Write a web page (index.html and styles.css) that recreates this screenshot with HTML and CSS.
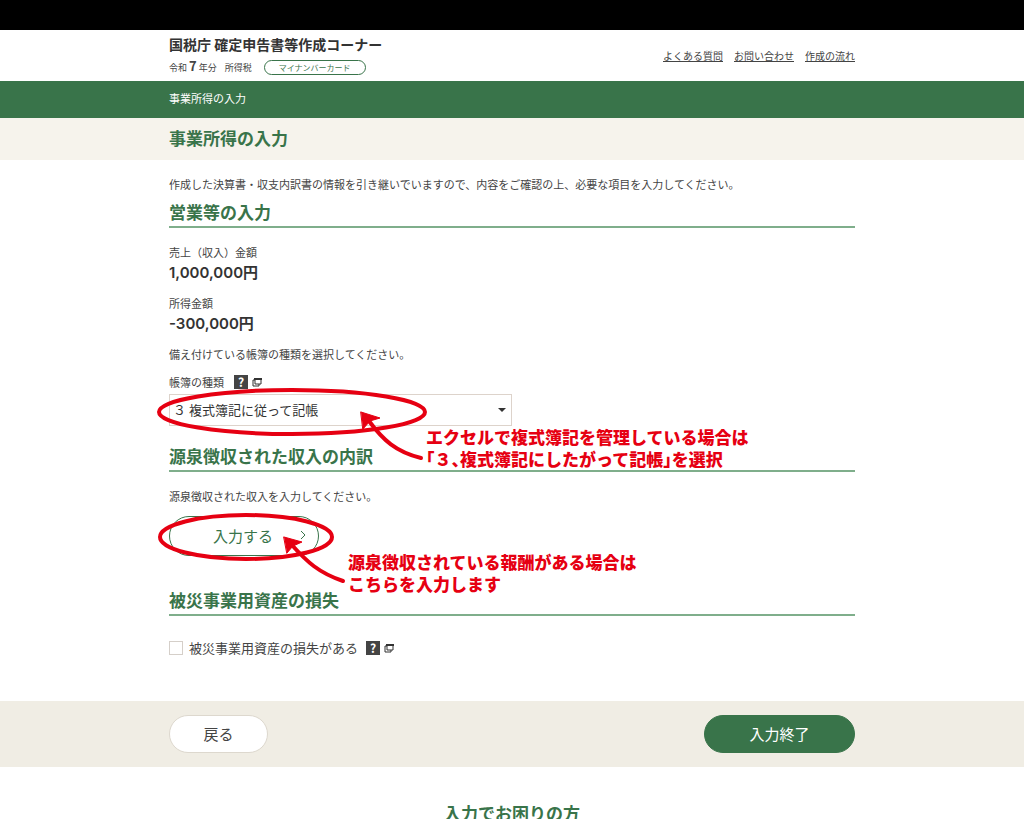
FILE: index.html
```
<!DOCTYPE html>
<html lang="ja">
<head>
    <meta charset="UTF-8">
    <meta name="viewport" content="width=device-width, initial-scale=1.0">
    <title>事業所得の入力</title>
    <link rel="stylesheet" href="styles.css">
</head>
<body>
    <div class="top-bar"></div>
    <header class="header">
        <div class="container header-inner">
            <div>
                <p class="site-name">国税庁 確定申告書等作成コーナー</p>
                <div class="site-meta">
                    <span>令和 <b>7</b> 年分</span>
                    <span>所得税</span>
                    <span class="tag">マイナンバーカード</span>
                </div>
            </div>
            <nav class="header-links">
                <a href="#">よくある質問</a>
                <a href="#">お問い合わせ</a>
                <a href="#">作成の流れ</a>
            </nav>
        </div>
    </header>
    <div class="breadcrumb">
        <div class="container">事業所得の入力</div>
    </div>
    <div class="page-title">
        <h1 class="container">事業所得の入力</h1>
    </div>

    <main class="container main">
        <p class="text">作成した決算書・収支内訳書の情報を引き継いでいますので、内容をご確認の上、必要な項目を入力してください。</p>

        <section>
            <h2>営業等の入力</h2>
            <dl class="amounts">
                <dt>売上（収入）金額</dt>
                <dd>1,000,000円</dd>
                <dt>所得金額</dt>
                <dd>-300,000円</dd>
            </dl>
            <p class="text">備え付けている帳簿の種類を選択してください。</p>
            <div class="label-row">
                <label for="book">帳簿の種類</label>
                <a class="help" href="#" aria-label="ヘルプ">
                    <span class="help-mark">?</span>
                    <svg class="window-icon" viewBox="0 0 10 10"><path d="M1 3h6v6H1z"/><path d="M3 2h6v5H3z"/><path class="thick" d="M2 2h8"/></svg>
                </a>
            </div>
            <div class="select-wrap">
                <select id="book">
                    <option>３ 複式簿記に従って記帳</option>
                </select>
                <div class="note note-book">
                    <svg viewBox="0 0 280 80">
                        <ellipse cx="136" cy="26" rx="133" ry="22"/>
                        <path d="M213 35C227 54 240 66 265 72"/>
                        <polygon points="205,26 224,32 214,35 207,43"/>
                    </svg>
                    <p>エクセルで複式簿記を管理している場合は<br>「３、複式簿記にしたがって記帳」を選択</p>
                </div>
            </div>
        </section>

        <section>
            <h2>源泉徴収された収入の内訳</h2>
            <p class="text">源泉徴収された収入を入力してください。</p>
            <div class="entry">
                <button type="button" class="btn btn-entry">入力する
                    <svg viewBox="0 0 6 10"><path d="M1 1l4 4-4 4"/></svg>
                </button>
                <div class="note note-entry">
                    <svg viewBox="0 0 200 80">
                        <ellipse cx="90" cy="27" rx="86" ry="22"/>
                        <path d="M135 34C151 52 163 63 187 71"/>
                        <polygon points="128,27 146,32 137,36 131,43"/>
                    </svg>
                    <p>源泉徴収されている報酬がある場合は<br>こちらを入力します</p>
                </div>
            </div>
        </section>

        <section>
            <h2>被災事業用資産の損失</h2>
            <div class="check-row">
                <input type="checkbox" id="loss">
                <label for="loss">被災事業用資産の損失がある</label>
                <a class="help" href="#" aria-label="ヘルプ">
                    <span class="help-mark">?</span>
                    <svg class="window-icon" viewBox="0 0 10 10"><path d="M1 3h6v6H1z"/><path d="M3 2h6v5H3z"/><path class="thick" d="M2 2h8"/></svg>
                </a>
            </div>
        </section>
    </main>

    <div class="actions">
        <div class="container actions-inner">
            <button type="button" class="btn btn-back">戻る</button>
            <button type="button" class="btn btn-done">入力終了</button>
        </div>
    </div>

    <footer class="support">
        <h2>入力でお困りの方</h2>
    </footer>
</body>
</html>
```
FILE: styles.css
```
* {
    box-sizing: border-box;
}
html {
    scrollbar-width: none;
}
body {
    margin: 0;
    background-color: #fff;
    color: #444;
    font-family: "Noto Sans CJK JP", sans-serif;
    font-size: 11px;
    line-height: 16px;
}
h1, h2, p, dl, dd {
    margin: 0;
}
.container {
    width: 90%;
    max-width: 686px;
    margin: 0 auto;
}

/* header */
.top-bar {
    height: 30px;
    background-color: #000;
}
.header-inner {
    display: flex;
    justify-content: space-between;
    align-items: center;
    padding: 4px 0;
}
.site-name {
    font-size: 14px;
    font-weight: 700;
    line-height: 20px;
    color: #333;
}
.site-meta {
    display: flex;
    align-items: center;
    gap: 8px;
    margin-top: 4px;
    font-size: 9px;
    line-height: 19px;
}
.site-meta b {
    font-size: 13px;
    font-weight: 700;
    line-height: 16px;
}
.tag {
    margin-left: 4px;
    padding: 0 14px;
    border: 1px solid #39744a;
    border-radius: 8px;
    color: #39744a;
    font-size: 8px;
    line-height: 13px;
}
.header-links {
    display: flex;
    gap: 11px;
    font-size: 10px;
}
.header-links a {
    color: #444;
}
.breadcrumb {
    padding: 9px 0 12px;
    background-color: #39744a;
    color: #fff;
}
.page-title {
    padding: 8px 0 10px;
    background-color: #f6f3ec;
}
h1, h2 {
    color: #39744a;
    font-size: 17px;
    font-weight: 700;
    line-height: 24px;
}

/* main form */
.main {
    padding: 16px 0 45px;
}
.main h2 {
    margin: 8px 0 16px;
    padding-bottom: 2px;
    border-bottom: 2px solid #7fae8b;
}
.amounts dd {
    margin: 3px 0 12px;
    color: #333;
    font-family: Inter, "Noto Sans CJK JP", sans-serif;
    font-size: 15px;
    font-weight: 600;
    line-height: 20px;
}
.label-row {
    display: flex;
    align-items: center;
    gap: 10px;
    margin: 12px 0 4px;
}
.help {
    display: flex;
    align-items: center;
    gap: 4px;
    text-decoration: none;
}
.help-mark {
    width: 14px;
    background-color: #444;
    color: #fff;
    font-size: 12px;
    font-weight: 700;
    line-height: 14px;
    text-align: center;
}
.window-icon {
    width: 10px;
    height: 10px;
    fill: #fff;
    stroke: #333;
    stroke-width: 1;
}
.window-icon .thick {
    stroke-width: 2;
}
.select-wrap, .entry {
    position: relative;
}
.select-wrap {
    width: 50%;
    margin-bottom: 18px;
}
.select-wrap::after {
    content: "";
    position: absolute;
    top: 14px;
    right: 6px;
    border: 4px solid transparent;
    border-top-color: #333;
    border-bottom: 0;
}
select {
    display: block;
    width: 100%;
    height: 32px;
    padding: 0 24px 2px 3px;
    border: 1px solid #ddd3cb;
    border-radius: 0;
    background-color: #fff;
    color: #333;
    font-family: inherit;
    font-size: 13px;
    appearance: none;
}

/* red hand-drawn notes over the form */
.note {
    position: absolute;
    top: 0;
    left: 0;
    color: #e60012;
    pointer-events: none;
    z-index: 1;
}
.note svg {
    position: absolute;
    left: -13px;
    fill: none;
    stroke: #e60012;
    stroke-width: 4;
    stroke-linecap: round;
}
.note polygon {
    fill: #e60012;
    stroke-width: 1;
}
.note p {
    font-size: 17px;
    font-weight: 900;
    line-height: 22px;
    white-space: nowrap;
    font-feature-settings: "halt";
}
.note-book svg {
    top: -8px;
    width: 280px;
}
.note-book p {
    padding: 32px 0 0 257px;
}
.note-entry svg {
    top: -6px;
    width: 200px;
}
.note-entry p {
    padding: 35px 0 0 179px;
}

/* buttons */
.btn {
    height: 38px;
    padding-bottom: 3px;
    border: 1px solid #39744a;
    border-radius: 20px;
    background-color: #fff;
    color: #39744a;
    font-family: inherit;
    font-size: 15px;
    cursor: pointer;
}
.entry {
    margin: 12px 0 32px;
}
.btn-entry {
    display: flex;
    align-items: center;
    gap: 27px;
    height: 40px;
    padding: 0 12px 2px 43px;
}
.btn-entry svg {
    width: 6px;
    height: 10px;
    fill: none;
    stroke: #39744a;
}
.check-row {
    display: flex;
    align-items: center;
    margin-top: 24px;
    font-size: 13px;
}
.check-row input {
    width: 14px;
    height: 14px;
    margin: 0 6px 0 0;
    border: 1px solid #d5cfc9;
    appearance: none;
}
.check-row .help {
    margin-left: 8px;
}
.actions {
    background-color: #f0ede4;
}
.actions-inner {
    display: flex;
    justify-content: space-between;
    padding: 14px 0;
}
.btn-back {
    width: 99px;
    border-color: #ddd8ce;
    color: #444;
}
.btn-done {
    width: 151px;
    background-color: #39744a;
    color: #fff;
}
.support {
    padding: 34px 0 40px;
    text-align: center;
}
```
